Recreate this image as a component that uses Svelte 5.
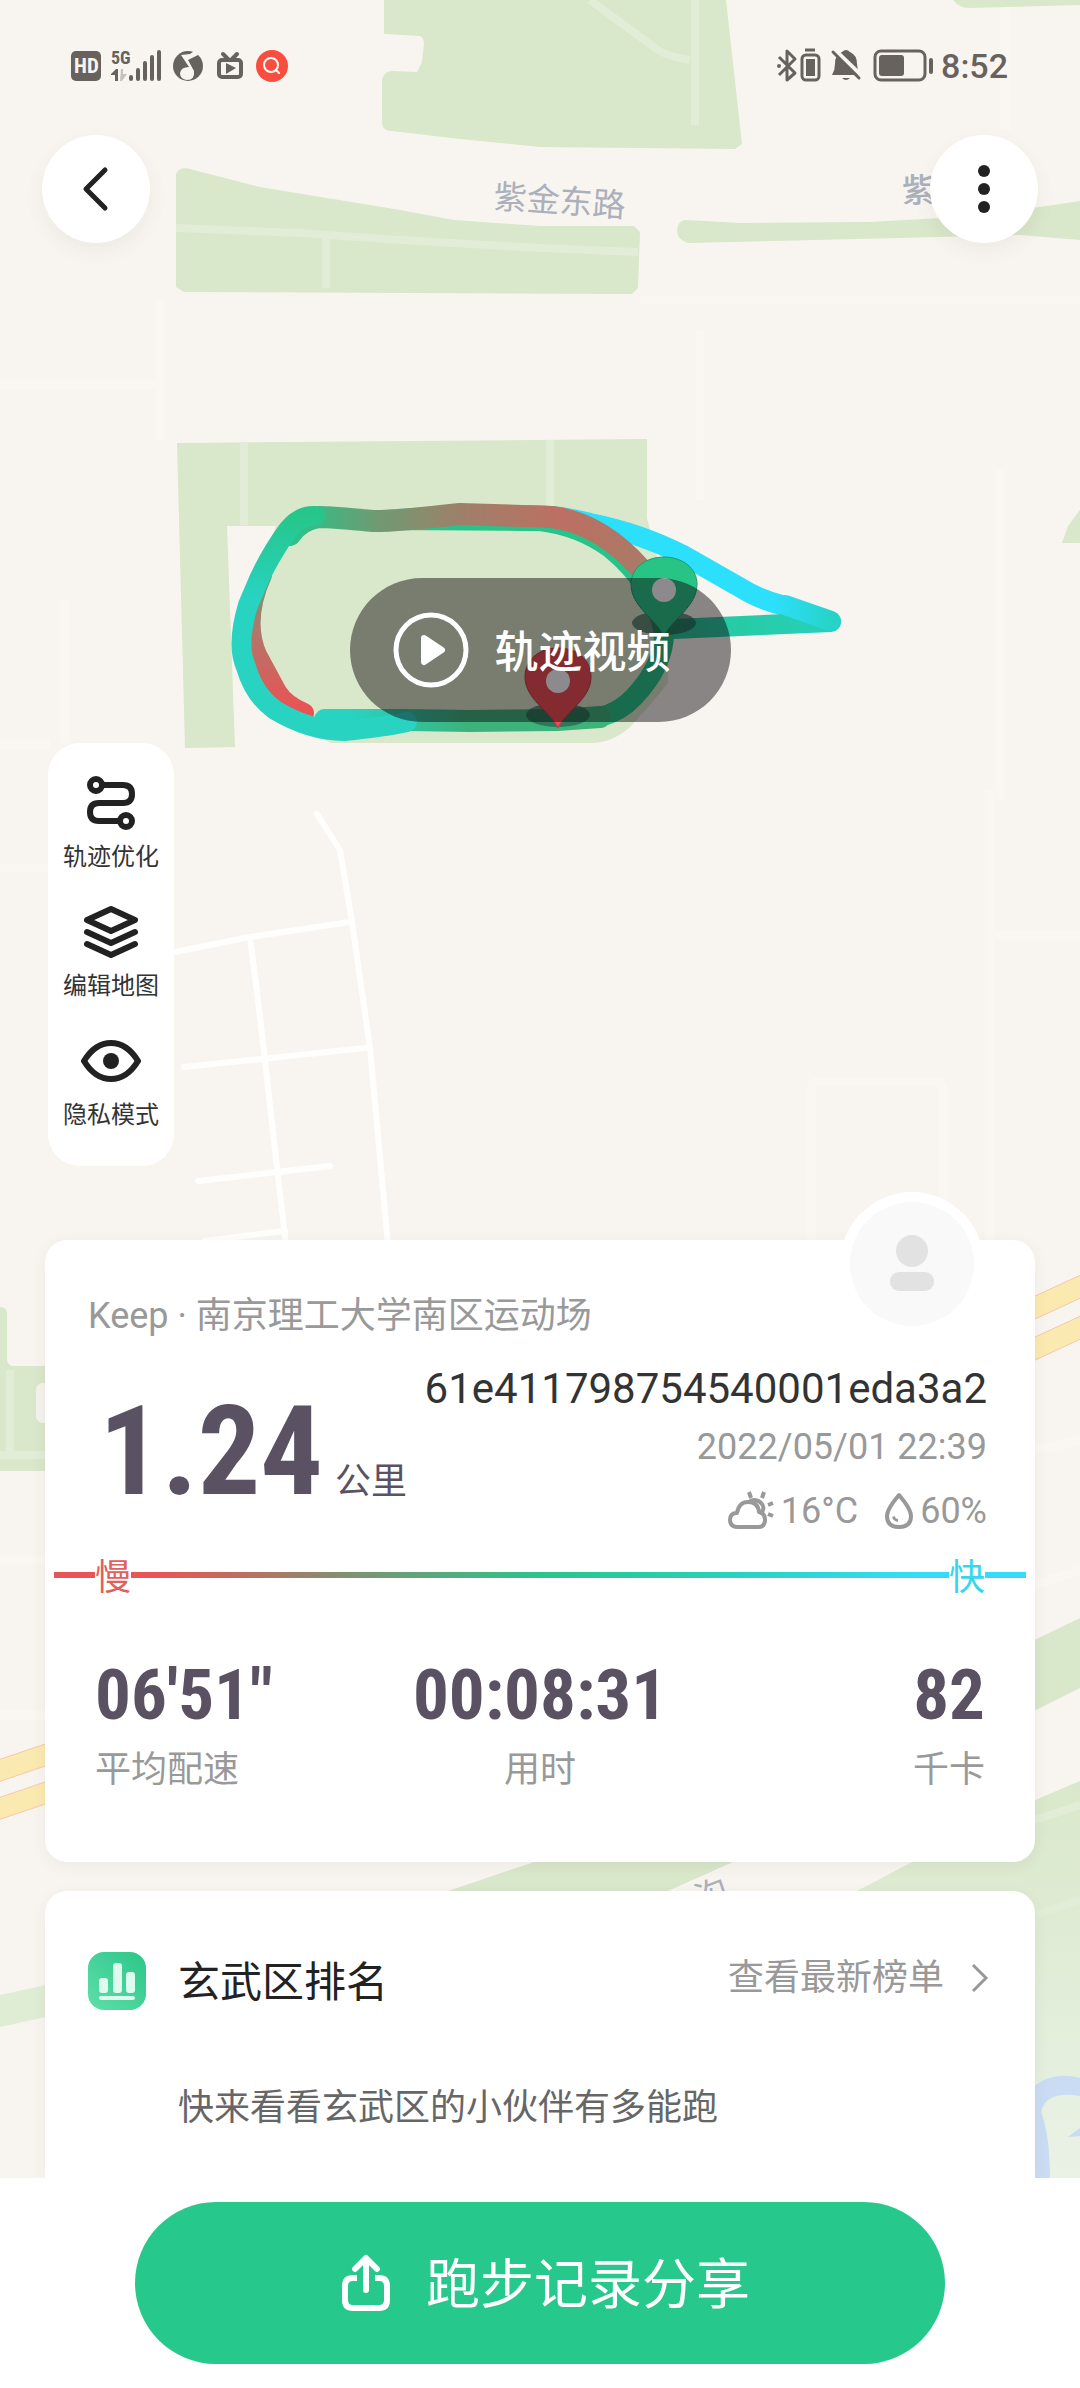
<script>
  const tools = [
    { id: 'route', label: '轨迹优化' },
    { id: 'layers', label: '编辑地图' },
    { id: 'eye', label: '隐私模式' }
  ];
  const stats = [
    { value: '06\'51"', label: '平均配速' },
    { value: '00:08:31', label: '用时' },
    { value: '82', label: '千卡' }
  ];
</script>

<div class="screen">
  <svg class="map" viewBox="0 0 1080 2388" preserveAspectRatio="xMidYMin slice" aria-hidden="true">
    <defs>
      <linearGradient id="leftSide" x1="0" y1="515" x2="0" y2="600" gradientUnits="userSpaceOnUse">
        <stop offset="0" stop-color="#26c68a" />
        <stop offset="1" stop-color="#28d3c2" />
      </linearGradient>
      <linearGradient id="bottomSide" x1="350" y1="0" x2="470" y2="0" gradientUnits="userSpaceOnUse">
        <stop offset="0" stop-color="#28d3c2" />
        <stop offset="1" stop-color="#3db27a" />
      </linearGradient>
      <linearGradient id="topSide" x1="290" y1="0" x2="640" y2="0" gradientUnits="userSpaceOnUse">
        <stop offset="0" stop-color="#26c68a" />
        <stop offset="0.25" stop-color="#6f9a72" />
        <stop offset="0.5" stop-color="#a07f69" />
        <stop offset="0.78" stop-color="#bd6f62" />
        <stop offset="1" stop-color="#aa7a67" />
      </linearGradient>
      <linearGradient id="slowSide" x1="0" y1="580" x2="0" y2="710" gradientUnits="userSpaceOnUse">
        <stop offset="0" stop-color="#6f9a74" />
        <stop offset="0.4" stop-color="#b2766a" />
        <stop offset="1" stop-color="#ea5354" />
      </linearGradient>
      <linearGradient id="spur" x1="673" y1="0" x2="831" y2="0" gradientUnits="userSpaceOnUse">
        <stop offset="0" stop-color="#26c796" />
        <stop offset="1" stop-color="#27d0bb" />
      </linearGradient>
      <linearGradient id="spurTip" x1="775" y1="0" x2="831" y2="0" gradientUnits="userSpaceOnUse">
        <stop offset="0" stop-color="#2cdffa" />
        <stop offset="1" stop-color="#27d3c8" />
      </linearGradient>
      <linearGradient id="meadow" x1="0" y1="1780" x2="0" y2="2180" gradientUnits="userSpaceOnUse">
        <stop offset="0" stop-color="#d9e8ca" />
        <stop offset="1" stop-color="#eaf2e6" />
      </linearGradient>
    </defs>
    <rect width="1080" height="2388" fill="#f8f5f0" />

    <g fill="none" stroke="#faf7f3" stroke-width="9">
      <path d="M0 385 H160 M1005 0 V130 M1000 470 V800 M0 868 H48 M0 1560 H45 M0 1715 H45" />
      <path d="M65 600 V743 M0 745 H50 M160 300 V440 M640 300 H1080 M700 330 V500" />
      <path d="M811 1240 V1090 Q811 1082 819 1082 H935 Q943 1082 943 1090 V1200 M990 1240 V790 M990 935 H1080 M1035 1450 L1080 1440 M1035 1585 L1080 1570" />
    </g>

    <g fill="#d9e7ca">
      <path d="M384 0 V34 L420 36 Q424 38 424 44 L422 62 L417 72 L392 71 Q382 72 382 82 V124 Q383 131 392 131 L460 139 L540 147 L735 149 L742 144 L726 0 Z" />
      <path d="M953 0 Q960 8 968 8 L1080 5 V0 Z" />
      <path d="M176 174 Q178 168 186 168 L260 187 L400 210 L454 220 L540 226 H634 L640 232 L638 288 L632 294 L184 292 L176 287 Z" />
      <path d="M677 230 Q678 220 686 220 L740 223 L870 222 L940 218 L1040 207 L1080 201 V240 L1020 235 L900 238 L688 243 Q677 240 677 230 Z" />
      <path d="M177 443 L647 439 V518 L668 600 V683 L650 705 L630 727 Q612 743 591 743 H331 L270 710 L245 640 L260 570 L276 526 L227 526 L235 747 L185 748 Z" />
      <path d="M1080 510 L1068 526 L1062 543 H1080 Z" />
      <path d="M0 1307 Q7 1307 7 1314 V1360 Q8 1366 14 1366 H60 V1471 H0 Z" />
      <path d="M1020 1647 L1080 1618 V1688 L1020 1718 Z" />
      <path d="M448 1891 L534 1862 L560 1850 H760 L733 1862 L668 1891 L640 1905 H410 Z" />
    </g>
    <path d="M840 1900 L912 1862 L1035 1800 L1080 1781 V2180 H1020 V1900 Z" fill="url(#meadow)" />
    <path d="M0 1995 L60 1982 V2014 L0 2027 Z" fill="#e0edd5" />
    <rect x="36" y="1383" width="24" height="40" rx="7" fill="#f5f3ee" />

    <g fill="none" stroke="#e1edd6" stroke-width="8">
      <path d="M695 0 V125 M590 0 L655 48 Q665 56 690 60" />
      <path d="M176 228 L300 233 L400 240 L540 248 L638 252 M326 232 V288" />
      <path d="M244 443 V525 M550 440 V515 M10 1370 V1455 M0 1455 H45 M1035 1820 L1080 1805 M1035 1915 L1080 1900" />
    </g>

    <g fill="#fbeab0" stroke="#f4c8ac" stroke-width="1">
      <path d="M-5 1761 L60 1739 V1761 L-5 1783 Z M-5 1799 L60 1777 V1799 L-5 1821 Z" />
      <path d="M1020 1303 L1085 1273 V1296 L1020 1326 Z M1020 1344 L1085 1314 V1337 L1020 1367 Z" />
    </g>

    <path d="M1030 2090 Q1050 2070 1080 2078 V2096 Q1046 2090 1041 2112 Q1050 2135 1050 2180 H1030 Z" fill="#cadcf4" />
    <path d="M1068 2137 L1080 2128 V2136 Z" fill="#cadcf4" />

    <g fill="none" stroke="#fefefd" stroke-width="6" stroke-linecap="round" stroke-linejoin="round">
      <path d="M317 814 L340 850 L352 922 L370 1048 L388 1245" />
      <path d="M175 952 L250 937 L350 922 M250 937 L258 1000 L265 1060 L275 1150 L286 1245" />
      <path d="M184 1067 L365 1048 M198 1181 L330 1166 M204 1241 L285 1231" />
    </g>

    <g class="roads">
      <text x="493" y="208" transform="rotate(4 493 208)">紫金东路</text>
      <text x="902" y="202" class="bold">紫</text>
      <text x="700" y="1911" transform="rotate(-20 700 1911)">沟</text>
    </g>

    <g fill="none" stroke-linecap="round" stroke-linejoin="round" stroke-width="20">
      <path d="M373 521 L440 516 L530 515 Q560 515 590 523 Q640 533 683 555 L741 588 Q760 600 785 606" stroke="#2cdffa" />
      <path d="M831 622 L673 629" stroke="url(#spur)" />
      <path d="M785 605 L831 621" stroke="url(#spurTip)" />
      <path d="M370 520 Q440 520 540 521 Q580 526 610 548 Q655 585 664 633 Q664 665 634 697 Q620 712 600 717 L557 720" stroke="#26c48a" />
      <path d="M262 575 Q242 620 257 655 L277 692 Q285 705 304 713" stroke="url(#slowSide)" />
      <path d="M600 717 L557 720 L470 721 L407 720 L325 720" stroke="url(#bottomSide)" stroke-width="22" />
      <path d="M640 568 Q600 523 552 517 L460 514 Q400 521 373 521 Q330 517 319 517 Q300 520 290 535" stroke="url(#topSide)" stroke-width="22" />
      <path d="M315 516 Q300 515 288 530 Q272 552 260 577 L248 605 Q236 645 246 667 Q254 695 275 710 Q310 731 344 731 Q385 727 407 722" stroke="url(#leftSide)" />
    </g>

    <g>
      <ellipse cx="664" cy="623" rx="32" ry="12" fill="#225b47" opacity="0.65" />
      <path d="M664 636 C656 619 631 607 631 584 C631 568 646 557 664 557 C682 557 697 568 697 584 C697 607 672 619 664 636 Z" fill="#27c486" stroke="#1b9b69" stroke-width="1" />
      <circle cx="664" cy="590" r="12" fill="#fff" />
      <ellipse cx="558" cy="715" rx="32" ry="12" fill="#225b47" opacity="0.65" />
      <path d="M558 728 C550 711 525 699 525 677 C525 659 540 648 558 648 C576 648 591 659 591 677 C591 699 566 711 558 728 Z" fill="#f04c53" stroke="#c63840" stroke-width="1" />
      <circle cx="558" cy="681" r="12" fill="#fff" />
    </g>
  </svg>

  <header>
    <div class="status">
      <svg width="218" height="36" viewBox="70 48 218 36" role="img" aria-label="HD 5G">
        <g fill="#67625e">
          <rect x="71" y="51" width="30" height="30" rx="5" />
          <text x="74" y="73" class="tiny hd">HD</text>
          <text x="111" y="64" class="tiny net">5G</text>
          <path d="M111 74 L116 69 H118 V81 H115 V75 H111 Z" />
          <path d="M121 69 H123 V74 H127 L122 81 H120 Z" opacity="0.35" />
          <rect x="129" y="75" width="4" height="6" rx="2" />
          <rect x="136" y="68" width="4" height="13" rx="2" />
          <rect x="143" y="61" width="4" height="20" rx="2" />
          <rect x="150" y="55" width="4" height="26" rx="2" />
          <rect x="157" y="50" width="4" height="31" rx="2" />
          <circle cx="188" cy="66" r="15" />
        </g>
        <path d="M181 55 L190 54 L197 49 L198 55 L188 60 L194 71 Q195 80 187 80 Q180 79 180 73 Q181 67 189 67 Z" fill="#f8f5f0" />
        <g fill="none" stroke="#67625e" stroke-width="4" stroke-linecap="round" stroke-linejoin="round">
          <rect x="219" y="60" width="22" height="17" rx="3" />
          <path d="M223 54 L228 59 M237 54 L232 59" />
        </g>
        <path d="M226 63 L236 68 L226 74 Z" fill="#67625e" />
        <circle cx="272" cy="66" r="16" fill="#f84e40" />
        <circle cx="271" cy="65" r="7" fill="none" stroke="#fff" stroke-width="2" />
        <path d="M276 70 L279 73" stroke="#fff" stroke-width="2" stroke-linecap="round" />
      </svg>
      <div class="right">
        <svg width="156" height="36" viewBox="778 48 156 36" role="img" aria-label="电量">
          <g fill="none" stroke="#67625e" stroke-width="3" stroke-linejoin="round">
            <path d="M780 57 L796 73 L788 80 V51 L796 59 L780 75" />
            <rect x="803" y="55" width="17" height="25" rx="4" />
            <path d="M806 50 H816" />
            <rect x="876" y="51" width="50" height="29" rx="6" />
          </g>
          <g fill="#67625e">
            <rect x="807" y="59" width="9" height="17" />
            <rect x="880" y="55" width="25" height="21" rx="3" />
            <rect x="930" y="58" width="4" height="16" rx="2" />
            <circle cx="780" cy="66" r="2" />
            <path d="M833 75 Q836 70 836 64 Q836 54 843 52 Q847 48 851 52 Q858 55 858 64 Q858 70 861 75 Z M843 78 H851 Q847 82 843 78 Z" />
          </g>
          <path d="M836 50 L863 76" stroke="#f8f5f0" stroke-width="4" />
          <path d="M834 52 L860 78" stroke="#67625e" stroke-width="3" stroke-linecap="round" />
        </svg>
        <time>8:52</time>
      </div>
    </div>
    <nav>
      <button class="round" aria-label="返回">
        <svg width="28" height="48" viewBox="0 0 28 48"><path d="M23 5 L4 24 L23 43" fill="none" stroke="#222" stroke-width="5" stroke-linecap="round" stroke-linejoin="round" /></svg>
      </button>
      <button class="round" aria-label="更多">
        <svg width="12" height="48" viewBox="0 0 12 48" fill="#222"><circle cx="6" cy="6" r="6" /><circle cx="6" cy="24" r="6" /><circle cx="6" cy="42" r="6" /></svg>
      </button>
    </nav>
  </header>

  <button class="video">
    <svg width="76" height="76" viewBox="0 0 76 76">
      <circle cx="38" cy="38" r="35" fill="none" stroke="#fff" stroke-width="5" />
      <path d="M31 26 L49 38 L31 50 Z" fill="#fff" stroke="#fff" stroke-width="6" stroke-linejoin="round" />
    </svg>
    <span>轨迹视频</span>
  </button>

  <div class="tools">
    {#each tools as tool (tool.id)}
      <button>
        <svg width="60" height="60" viewBox="0 0 60 60" fill="none" stroke="#222" stroke-width="6" stroke-linecap="round" stroke-linejoin="round">
          {#if tool.id === 'route'}
            <circle cx="15" cy="12" r="6" />
            <circle cx="45" cy="48" r="6" />
            <path d="M22 12 H42 Q51 12 51 21 Q51 30 42 30 H18 Q9 30 9 39 Q9 48 18 48 H38" />
          {:else if tool.id === 'layers'}
            <path d="M30 7 L54 18 L30 29 L6 18 Z M6 30 L30 41 L54 30 M6 42 L30 53 L54 42" />
          {:else}
            <path d="M3 30 Q14 12 30 12 Q46 12 57 30 Q46 48 30 48 Q14 48 3 30 Z" />
            <circle cx="30" cy="30" r="8" fill="#222" stroke="none" />
          {/if}
        </svg>
        <span>{tool.label}</span>
      </button>
    {/each}
  </div>

  <main>
    <section class="card record">
      <svg class="avatar" width="144" height="144" viewBox="0 0 144 144" role="img" aria-label="头像">
        <circle cx="72" cy="72" r="72" fill="#fff" />
        <circle cx="72" cy="72" r="62" fill="#f9f9f9" />
        <g fill="#e2e2e2"><circle cx="72" cy="59" r="16" /><rect x="50" y="80" width="44" height="19" rx="9" /></g>
      </svg>
      <p class="place">Keep · 南京理工大学南区运动场</p>
      <div class="summary">
        <div class="distance"><strong>1.24</strong><span>公里</span></div>
        <div class="meta">
          <span class="user">61e411798754540001eda3a2</span>
          <time>2022/05/01 22:39</time>
          <div class="weather">
            <svg width="48" height="40" viewBox="0 0 48 40" fill="none" stroke="#999" stroke-width="4">
              <path d="M11 36 Q3 36 3 29 Q3 22 10 22 Q12 11 21 11 Q31 11 32 21 Q38 22 38 29 Q38 36 31 36 Z" stroke-linejoin="round" />
              <path d="M22 11 Q27 7 33 11 Q40 17 33 23 M24 7 L22 1 M35 7 L37 1 M41 14 L46 12 M41 23 L46 25" />
            </svg>
            <span>16°C</span>
            <svg class="drop" width="30" height="40" viewBox="0 0 30 40" fill="none" stroke="#999" stroke-width="4" stroke-linejoin="round">
              <path d="M15 4 Q27 18 27 25 Q27 36 15 36 Q3 36 3 25 Q3 18 15 4 Z" />
              <path d="M8 26 Q9 30 14 31 L14 28 Q11 28 11 25 Z" fill="#999" stroke="none" />
            </svg>
            <span>60%</span>
          </div>
        </div>
      </div>
      <div class="pace">
        <i class="slow-end"></i><span class="slow">慢</span><i class="scale"></i><span class="fast">快</span><i class="fast-end"></i>
      </div>
      <dl class="stats">
        {#each stats as stat (stat.label)}
          <div><dd>{stat.value}</dd><dt>{stat.label}</dt></div>
        {/each}
      </dl>
    </section>

    <section class="card rank">
      <div class="rank-head">
        <svg width="58" height="58" viewBox="0 0 58 58" aria-hidden="true">
          <defs>
            <linearGradient id="badge" x1="0" y1="1" x2="1" y2="0"><stop offset="0" stop-color="#5edfaa" /><stop offset="1" stop-color="#2cc588" /></linearGradient>
          </defs>
          <rect width="58" height="58" rx="16" fill="url(#badge)" />
          <g fill="#ddfbee"><rect x="11" y="26" width="9" height="15" rx="3" /><rect x="25" y="11" width="9" height="30" rx="3" /><rect x="38" y="20" width="9" height="21" rx="3" /><rect x="11" y="44" width="36" height="4" rx="2" /></g>
        </svg>
        <h2>玄武区排名</h2>
        <a href="#rank">查看最新榜单
          <svg width="18" height="30" viewBox="0 0 18 30"><path d="M2 2 L15 15 L2 28" fill="none" stroke="#999" stroke-width="3" /></svg>
        </a>
      </div>
      <p class="invite">快来看看玄武区的小伙伴有多能跑</p>
    </section>
  </main>

  <footer>
    <button class="share">
      <svg width="48" height="58" viewBox="0 0 48 58" fill="none" stroke="#fff" stroke-width="6" stroke-linecap="round" stroke-linejoin="round">
        <path d="M24 36 V5 M13 15 L24 4 L35 15" />
        <path d="M15 24 H11 Q3 24 3 32 V46 Q3 54 11 54 H37 Q45 54 45 46 V32 Q45 24 37 24 H33" stroke-linecap="butt" />
      </svg>
      <span>跑步记录分享</span>
    </button>
  </footer>
</div>

<style>
  :global(body) {
    margin: 0;
  }
  .screen {
    position: relative;
    display: flex;
    flex-direction: column;
    min-height: 100vh;
    overflow: hidden;
    font-family: Roboto, 'Noto Sans CJK SC', sans-serif;
    color: #333;
  }
  .map {
    position: absolute;
    inset: 0;
    width: 100%;
    height: 100%;
  }
  .roads text {
    font-size: 33px;
    fill: #abb0ba;
  }
  .roads .bold {
    font-weight: 500;
  }
  .tiny {
    font-family: 'Roboto Condensed', Roboto, sans-serif;
    font-weight: 700;
  }
  .hd {
    font-size: 21px;
    fill: #f8f5f0;
  }
  .net {
    font-size: 18px;
  }
  header,
  main,
  footer,
  .video,
  .tools {
    position: relative;
  }
  button {
    border: 0;
    padding: 0;
    font-family: inherit;
    color: inherit;
    cursor: pointer;
  }
  svg {
    display: block;
    flex: none;
  }
  .status {
    display: flex;
    justify-content: space-between;
    align-items: center;
    height: 36px;
    padding: 48px 72px 0 70px;
  }
  .right {
    display: flex;
    align-items: center;
    gap: 8px;
    color: #67625e;
    font-size: 34px;
    font-weight: 500;
    line-height: 36px;
  }
  nav {
    display: flex;
    justify-content: space-between;
    padding: 51px 42px 0;
  }
  .round {
    display: flex;
    align-items: center;
    justify-content: center;
    width: 108px;
    height: 108px;
    border-radius: 50%;
    background: #fff;
    box-shadow: 0 8px 20px rgba(60, 40, 30, 0.06);
  }
  .video {
    display: flex;
    align-items: center;
    gap: 26px;
    align-self: center;
    height: 144px;
    margin-top: 335px;
    padding: 0 60px 0 43px;
    border-radius: 72px;
    background: rgba(10, 6, 10, 0.47);
    color: #fff;
    font-size: 44px;
    font-weight: 500;
    line-height: 60px;
  }
  .video span,
  .share span,
  .pace span {
    padding-top: 6px;
  }
  .tools {
    display: flex;
    flex-direction: column;
    gap: 29px;
    align-self: flex-start;
    margin: 21px 0 0 48px;
    padding: 30px 15px 35px;
    border-radius: 32px;
    background: #fff;
  }
  .tools button {
    display: flex;
    flex-direction: column;
    align-items: center;
    gap: 8px;
    background: none;
    font-size: 24px;
    line-height: 32px;
  }
  main {
    display: flex;
    flex: 1;
    flex-direction: column;
    gap: 29px;
    padding: 74px 45px 0;
  }
  .card {
    position: relative;
    border-radius: 22px;
    background: #fff;
    box-shadow: 0 4px 16px rgba(60, 40, 30, 0.06);
  }
  .avatar {
    position: absolute;
    top: -48px;
    right: 51px;
  }
  p,
  h2,
  dl,
  dd {
    margin: 0;
  }
  .place {
    padding: 50px 43px 0;
    color: #999;
    font-size: 36px;
    line-height: 52px;
  }
  .summary {
    display: flex;
    justify-content: space-between;
    align-items: flex-end;
    padding: 18px 48px 0 54px;
  }
  .distance {
    display: flex;
    align-items: baseline;
    gap: 12px;
    padding-bottom: 22px;
    color: #5a5262;
    font-size: 36px;
  }
  .distance strong,
  dd {
    font-family: 'Roboto Condensed', Roboto, sans-serif;
    font-weight: 700;
    color: #5a5262;
  }
  .distance strong {
    font-size: 124px;
    line-height: 132px;
  }
  .meta {
    display: flex;
    flex-direction: column;
    align-items: flex-end;
    color: #999;
    font-size: 36px;
    line-height: 58px;
  }
  .user {
    color: #333;
    font-size: 42px;
  }
  .weather {
    display: flex;
    align-items: center;
    gap: 6px;
    margin-top: 6px;
  }
  .drop {
    margin-left: 20px;
  }
  .pace {
    display: flex;
    align-items: center;
    height: 48px;
    margin: 11px 9px 0;
    font-size: 36px;
    line-height: 48px;
  }
  .pace i {
    width: 41px;
    height: 6px;
  }
  .pace .slow-end {
    background: #e85556;
  }
  .pace .fast-end {
    background: #36dcf7;
  }
  .pace .scale {
    flex: 1;
    background: linear-gradient(90deg, #e85556 4%, #7d9371 27%, #2bc48a 50%, #29d3c0 75%, #36dcf7 96%);
  }
  .slow {
    color: #e0605d;
  }
  .fast {
    color: #36d6ee;
  }
  .stats {
    display: grid;
    grid-template-columns: 1fr auto 1fr;
    padding: 58px 50px 67px;
  }
  .stats div {
    display: flex;
    flex-direction: column;
    gap: 12px;
    text-align: center;
  }
  .stats div:first-child {
    text-align: left;
  }
  .stats div:last-child {
    text-align: right;
  }
  dd {
    font-size: 71px;
    line-height: 76px;
  }
  dt {
    color: #999;
    font-size: 36px;
    line-height: 50px;
  }
  .rank {
    flex: 1;
    padding: 60px 46px 0 43px;
    border-radius: 22px 22px 0 0;
  }
  .rank-head {
    display: flex;
    align-items: center;
    gap: 32px;
    height: 60px;
  }
  h2 {
    flex: 1;
    padding-top: 4px;
    color: #222;
    font-size: 42px;
    font-weight: 400;
    line-height: 60px;
  }
  a {
    display: flex;
    align-items: center;
    gap: 27px;
    padding-bottom: 6px;
    color: #999;
    font-size: 36px;
    line-height: 50px;
    text-decoration: none;
  }
  .invite {
    padding: 72px 0 0 90px;
    color: #666;
    font-size: 36px;
    line-height: 50px;
  }
  footer {
    padding: 24px 135px;
    background: #fff;
  }
  .share {
    display: flex;
    align-items: center;
    justify-content: center;
    gap: 36px;
    width: 100%;
    height: 162px;
    padding-left: 12px;
    border-radius: 81px;
    background: #26c88c;
    color: #fff;
    font-size: 54px;
    line-height: 72px;
  }
</style>
